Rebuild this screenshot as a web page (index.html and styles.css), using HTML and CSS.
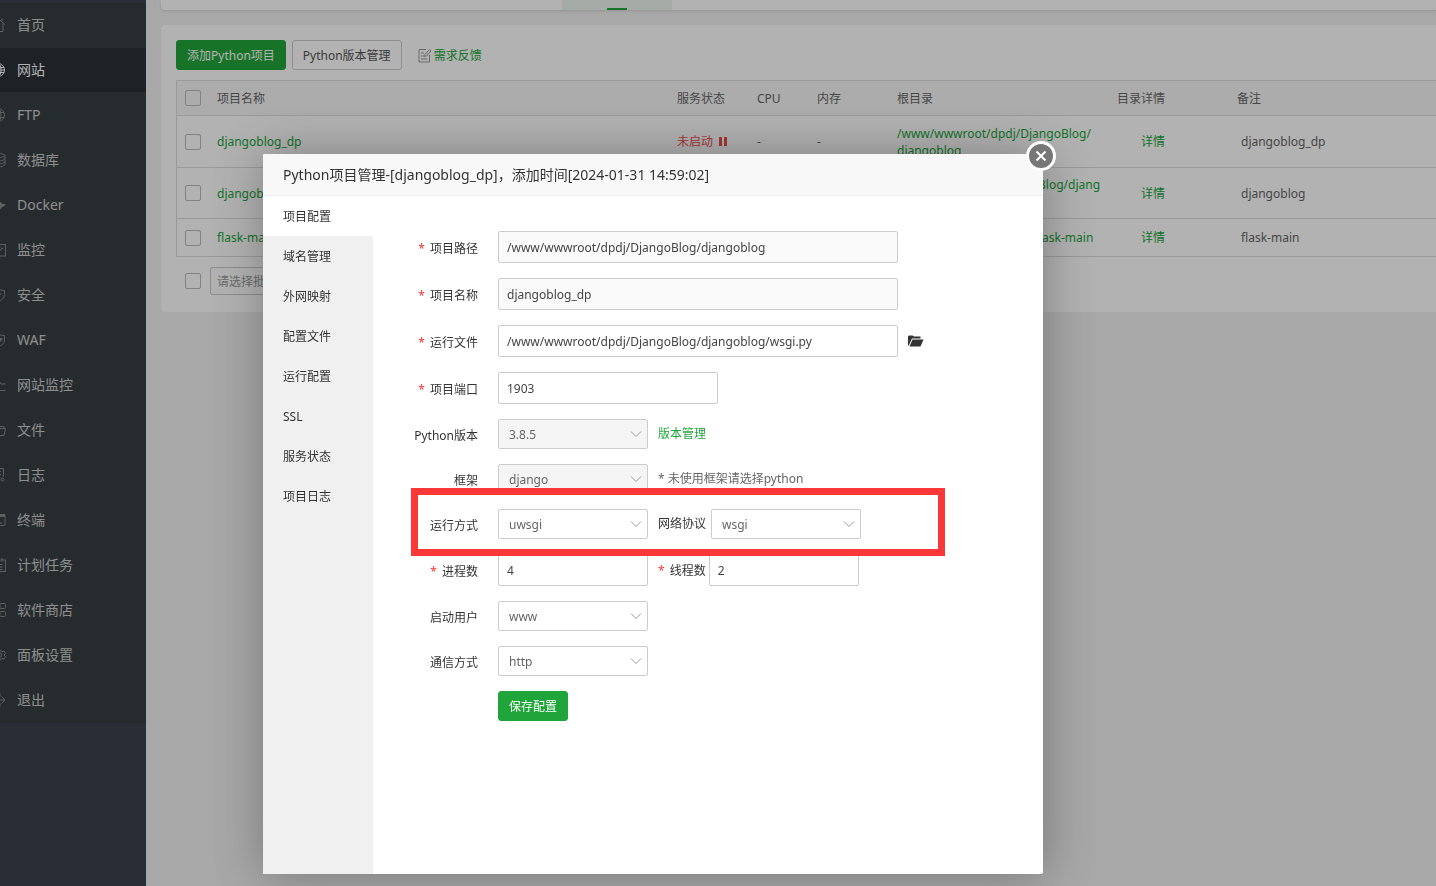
FILE: index.html
```
<!DOCTYPE html>
<html lang="zh-CN">
<head>
<meta charset="utf-8">
<title>Python项目管理</title>
<link rel="stylesheet" href="styles.css">
</head>
<body>
<div class="app">
  <nav class="sidebar">
    <ul class="menu">
      <li><a href="#"><svg viewBox="0 0 16 16"><path d="M1 7.500 8 1.500l7 6M3 6.500V14.500h3.500V10h3v4.500H13V6.500M12 1.500v3"/></svg>首页</a></li>
      <li class="active"><a href="#"><svg viewBox="0 0 16 16"><circle cx="8" cy="8" r="6.500"/><ellipse cx="8" cy="8" rx="3" ry="6.500"/><path d="M8 1.500v13M2 5.500h12M1.500 8h13M2 10.500h12"/></svg>网站</a></li>
      <li><a href="#"><svg viewBox="0 0 16 16"><circle cx="8" cy="8" r="6.500"/><ellipse cx="8" cy="8" rx="3" ry="6.500"/><path d="M8 1.500v13M2 5.500h12M2 10.500h12"/></svg>FTP</a></li>
      <li><a href="#"><svg viewBox="0 0 16 16"><ellipse cx="8" cy="3.500" rx="7" ry="2"/><path d="M1 3.500v9c0 3 14 3 14 0v-9M1 6.500c0 3 14 3 14 0M1 9.500c0 3 14 3 14 0"/></svg>数据库</a></li>
      <li><a href="#"><svg viewBox="0 0 16 16"><path class="fill" d="M0 8h9.500c.5-1 .3-2.500 0-3.500 1.500.5 2.500 1.500 2.500 2.500 1.200-.4 2.500-.2 3.500.5-.5 1.500-2 2.500-3.500 2.500C10.500 13 8 14.500 5 14.500 2 14.500 0 12 0 8Z"/></svg>Docker</a></li>
      <li><a href="#"><svg viewBox="0 0 16 16"><rect x="1" y="2.500" width="14.500" height="11.500"/><path d="m3 10 3-3 3 3 3-4 1.500 1M9.500 5.500h1"/></svg>监控</a></li>
      <li><a href="#"><svg viewBox="0 0 16 16"><path d="M8 1.500c2 1.500 4 2 6.500 2v4c0 3.500-3 6-6.500 7-3.500-1-6.500-3.500-6.500-7v-4c2.500 0 4.500-.5 6.500-2ZM5 8l2.500 2.500L11.500 6"/></svg>安全</a></li>
      <li><a href="#"><svg viewBox="0 0 16 16"><path d="M8 2c2 1 4 1.500 6.500 1.500V8c0 3.500-3 5.500-6.500 6.500C4.500 13.500 1.500 11.500 1.500 8V3.500C4 3.500 6 3 8 2Z"/><path class="fill" d="M5 6h8l-2.500 4H7Z"/></svg>WAF</a></li>
      <li><a href="#"><svg viewBox="0 0 16 16"><path d="M1 7h4l3-5 3 5h4.500M1 13.500h14.500"/></svg>网站监控</a></li>
      <li><a href="#"><svg viewBox="0 0 16 16"><path d="M1.500 13.500V2.500h5l1.500 2h6v2M1.500 6.500h14L14 13.500H1.500Z"/></svg>文件</a></li>
      <li><a href="#"><svg viewBox="0 0 16 16"><path d="M9 14.500H2.500v-13h11v8M5 4.500h6M5 7.500h6M5 10.500h4"/><circle cx="12.500" cy="12.500" r="1.500"/></svg>日志</a></li>
      <li><a href="#"><svg viewBox="0 0 16 16"><rect x="1" y="2.500" width="14" height="11" rx="1"/><path class="fill" d="M1 2h14v3H1Z"/><path d="m4 7.500 2 1.500-2 1.500M9 11h3"/></svg>终端</a></li>
      <li><a href="#"><svg viewBox="0 0 16 16"><rect x="1.500" y="3" width="14" height="11.500"/><path d="M5 1v4M12 1v4M4.500 7.500h8M4.500 10h8M4.500 12.500h8"/></svg>计划任务</a></li>
      <li><a href="#"><svg viewBox="0 0 16 16"><rect x="2" y="1.500" width="5" height="5" rx="1"/><rect x="10" y="1.500" width="5.500" height="5" rx="1"/><rect x="2" y="9.500" width="5" height="5" rx="1"/><rect x="10" y="9.500" width="5.500" height="5" rx="1"/></svg>软件商店</a></li>
      <li><a href="#"><svg viewBox="0 0 16 16"><path d="M6.500 1.500h3l.5 2 2 1 2-.5 1.500 2.500L14 8l1.500 1.500L14 12l-2-.5-2 1-.5 2h-3l-.5-2-2-1-2 .5L.5 9.500 2 8 .5 6.500 2 4l2 .5 2-1Z"/><circle cx="9" cy="8" r="2.500"/></svg>面板设置</a></li>
      <li><a href="#"><svg viewBox="0 0 16 16"><path d="M10 4.500v-3H2v13h8v-3M6 8h9M11.500 4.500 15 8l-3.500 3.500"/></svg>退出</a></li>
    </ul>
  </nav>

  <main class="main">
    <div class="tabs"><div class="tab"></div></div>
    <section class="panel">
      <div class="toolbar">
        <button class="btn primary" type="button">添加Python项目</button>
        <button class="btn" type="button">Python版本管理</button>
        <a class="feedback" href="#"><svg viewBox="0 0 13 15"><path d="M8 1.500H1v12.500h10.500V7M3 5h3M3 8h3M3 11h6.500M6.500 8.500l.5-2 4.500-5 1.500 1.500-4.500 5Z"/></svg><span>需求反馈</span></a>
      </div>
      <table class="projects">
        <colgroup><col class="c-check"><col class="c-name"><col class="c-state"><col class="c-cpu"><col class="c-mem"><col class="c-root"><col class="c-detail"><col></colgroup>
        <thead>
          <tr><th class="check"><input type="checkbox" aria-label="全选"></th><th>项目名称</th><th>服务状态</th><th>CPU</th><th>内存</th><th>根目录</th><th>目录详情</th><th>备注</th></tr>
        </thead>
        <tbody>
          <tr class="tall"><td><input type="checkbox" aria-label="djangoblog_dp"></td><td><a href="#">djangoblog_dp</a></td><td><span class="stopped">未启动<i></i></span></td><td>-</td><td>-</td><td><a href="#">/www/wwwroot/dpdj/DjangoBlog/<br>djangoblog</a></td><td class="detail"><a href="#">详情</a></td><td class="note">djangoblog_dp</td></tr>
          <tr class="tall"><td><input type="checkbox" aria-label="djangoblog"></td><td><a href="#">djangoblog</a></td><td><span class="stopped">未启动<i></i></span></td><td>-</td><td>-</td><td><a href="#">/www/wwwroot2/DjangoBlog/djang<br>oblog</a></td><td class="detail"><a href="#">详情</a></td><td class="note">djangoblog</td></tr>
          <tr><td><input type="checkbox" aria-label="flask-main"></td><td><a href="#">flask-main</a></td><td><span class="stopped">未启动<i></i></span></td><td>-</td><td>-</td><td><a href="#">/www/wwwroot/flask01/flask-main</a></td><td class="detail"><a href="#">详情</a></td><td class="note">flask-main</td></tr>
        </tbody>
      </table>
      <div class="batch">
        <input type="checkbox" aria-label="选择全部项目">
        <select aria-label="批量操作"><option>请选择批量操作</option></select>
      </div>
    </section>
  </main>
</div>

<div class="mask"></div>

<div class="dialog" role="dialog" aria-labelledby="dialog-title">
  <h1 class="dialog-title" id="dialog-title">Python项目管理-[djangoblog_dp]，添加时间[2024-01-31 14:59:02]</h1>
  <div class="dialog-body">
    <ul class="side-tabs">
      <li class="on"><a href="#">项目配置</a></li>
      <li><a href="#">域名管理</a></li>
      <li><a href="#">外网映射</a></li>
      <li><a href="#">配置文件</a></li>
      <li><a href="#">运行配置</a></li>
      <li><a href="#">SSL</a></li>
      <li><a href="#">服务状态</a></li>
      <li><a href="#">项目日志</a></li>
    </ul>
    <form class="form">
      <div class="row"><label class="name" for="path"><b>*</b>项目路径</label><input class="wide" id="path" type="text" value="/www/wwwroot/dpdj/DjangoBlog/djangoblog" readonly></div>
      <div class="row"><label class="name" for="pname"><b>*</b>项目名称</label><input class="wide" id="pname" type="text" value="djangoblog_dp" readonly></div>
      <div class="row"><label class="name" for="file"><b>*</b>运行文件</label><input class="wide" id="file" type="text" value="/www/wwwroot/dpdj/DjangoBlog/djangoblog/wsgi.py">
        <button class="folder" type="button" aria-label="选择文件"><svg viewBox="0 0 16 12"><path d="M0 11V1.500L1 .5h3.500L6 1.500h6.500V3.500H4L1 10Z"/><path d="M4.500 4.500H15.500L12.500 11.500H1.500Z"/></svg></button></div>
      <div class="row"><label class="name" for="port"><b>*</b>项目端口</label><input class="mid" id="port" type="text" value="1903"></div>
      <div class="row"><label class="name" for="ver">Python版本</label><span class="pick"><select id="ver" disabled><option>3.8.5</option></select><svg viewBox="0 0 12 8"><path d="m1 1.500 5 5 5-5"/></svg></span><a href="#">版本管理</a></div>
      <div class="row"><label class="name" for="frame">框架</label><span class="pick"><select id="frame" disabled><option>django</option></select><svg viewBox="0 0 12 8"><path d="m1 1.500 5 5 5-5"/></svg></span><span class="hint">* 未使用框架请选择python</span></div>
      <div class="row"><label class="name" for="mode">运行方式</label><span class="pick"><select id="mode"><option>uwsgi</option></select><svg viewBox="0 0 12 8"><path d="m1 1.500 5 5 5-5"/></svg></span><span class="pair"><label for="proto">网络协议</label><span class="pick"><select id="proto"><option>wsgi</option></select><svg viewBox="0 0 12 8"><path d="m1 1.500 5 5 5-5"/></svg></span></span></div>
      <div class="row"><label class="name" for="proc"><b>*</b>进程数</label><input class="short" id="proc" type="text" value="4"><span class="pair tight"><label for="thread"><b>*</b>线程数</label><input class="short" id="thread" type="text" value="2"></span></div>
      <div class="row"><label class="name" for="user">启动用户</label><span class="pick"><select id="user"><option>www</option></select><svg viewBox="0 0 12 8"><path d="m1 1.500 5 5 5-5"/></svg></span></div>
      <div class="row"><label class="name" for="comm">通信方式</label><span class="pick"><select id="comm"><option>http</option></select><svg viewBox="0 0 12 8"><path d="m1 1.500 5 5 5-5"/></svg></span></div>
      <div class="row"><span class="name"></span><button class="btn primary" type="button">保存配置</button></div>
    </form>
  </div>
  <div class="highlight"></div>
  <button class="close" type="button" aria-label="关闭"><svg viewBox="0 0 12 12"><path d="m1.500 1.500 9 9M10.500 1.500l-9 9"/></svg></button>
</div>
</body>
</html>
```
FILE: styles.css
```
* { box-sizing: border-box; }

body {
  margin: 0;
  overflow: hidden;
  background: #f1f1f1;
  color: #666;
  font: 12px/18px "Noto Sans", "Noto Sans CJK SC", sans-serif;
}

ul { margin: 0; padding: 0; list-style: none; }
a { color: #20a53a; text-decoration: none; }
button, input, select { font: inherit; }
svg { fill: none; stroke: currentColor; }

.app { display: flex; min-height: 100vh; }

/* sidebar */
.sidebar { flex: 0 0 146px; padding-top: 3px; overflow: hidden; background: #3c424e; }
.menu li { height: 45px; border-bottom: 1px solid #373e42; background: #373e42; }
.menu .active { background: #2c3036; }
.menu a {
  display: flex;
  align-items: center;
  gap: 11px;
  height: 44px;
  margin-left: -10px;
  color: #ccc;
  font-size: 14px;
}
.menu svg { width: 16px; height: 16px; color: #888; }
.menu .fill { fill: currentColor; stroke: none; }
.menu .active a, .menu .active svg { color: #fff; }

/* main area */
.main { flex: 1; min-width: 0; padding-left: 15px; }
.tabs {
  display: flex;
  height: 10px;
  margin-bottom: 15px;
  padding-left: 401px;
  border-radius: 0 0 0 4px;
  background: #fff;
  box-shadow: 0 1px 3px rgba(0, 0, 0, .12);
}
.tab {
  display: flex;
  align-items: flex-end;
  justify-content: center;
  width: 110px;
  background: #edf7ef;
}
.tab::after { content: ""; width: 20px; height: 2px; background: #20a53a; }

.panel { padding: 15px 0 17px 15px; border-radius: 4px 0 0 4px; background: #fff; }
.toolbar { display: flex; align-items: center; gap: 6px; margin-bottom: 10px; }
.btn {
  height: 30px;
  padding: 2px 10px 0;
  border: 1px solid #ccc;
  border-radius: 3px;
  background: #fff;
  color: #555;
  cursor: pointer;
}
.btn.primary { border-color: #20a53a; background: #20a53a; color: #fff; }
.feedback { display: flex; align-items: center; gap: 3px; margin-left: 10px; }
.feedback svg { width: 13px; height: 15px; color: #999; }
.feedback span { padding-top: 2px; }

.projects {
  width: 100%;
  table-layout: fixed;
  border-collapse: separate;
  border-spacing: 0;
  border: 1px solid #ddd;
  border-width: 1px 0 0 1px;
}
.c-check { width: 32px; }
.c-name { width: 460px; }
.c-state { width: 80px; }
.c-cpu { width: 60px; }
.c-mem { width: 80px; }
.c-root { width: 220px; }
.c-detail { width: 120px; }
.projects th, .projects td {
  height: 38px;
  padding: 0 8px;
  border-bottom: 1px solid #ddd;
  font-weight: normal;
  text-align: left;
}
.projects th { height: 35px; padding-top: 2px; background: #f6f6f6; }
.projects .check { padding-top: 0; }
.projects .tall td { height: 51px; line-height: 17px; }
.projects .tall:first-child td { height: 52px; }
.projects .detail { padding-left: 32px; }
.projects .note { padding-left: 12px; }
input[type="checkbox"] {
  display: block;
  appearance: none;
  width: 16px;
  height: 16px;
  margin: 0;
  border: 1px solid #bbb;
  border-radius: 2px;
}
.stopped { display: flex; align-items: center; gap: 6px; color: #ef4f4b; }
.stopped i { width: 8px; height: 9px; border: solid #ef4f4b; border-width: 0 3px; }
.batch { display: flex; align-items: center; gap: 9px; margin-top: 10px; padding-left: 9px; }
.batch select {
  appearance: none;
  width: 160px;
  height: 28px;
  padding: 2px 6px 0;
  border: 1px solid #ccc;
  border-radius: 2px;
  background: #fff;
  color: #999;
}

.mask { position: fixed; inset: 0; background: rgba(0, 0, 0, .3); }

/* dialog */
.dialog {
  position: absolute;
  top: 154px;
  bottom: 12px;
  left: 263px;
  display: flex;
  flex-direction: column;
  width: 780px;
  border-radius: 2px;
  background: #fff;
  box-shadow: 1px 1px 50px rgba(0, 0, 0, .3);
  color: #333;
}
.dialog-title {
  margin: 0;
  padding: 0 20px;
  border-bottom: 1px solid #eee;
  border-radius: 2px 2px 0 0;
  background: #f8f8f8;
  font-size: 14px;
  font-weight: normal;
  line-height: 41px;
}
.dialog-body { display: flex; flex: 1; }
.side-tabs { width: 110px; background: #f0f0f0; }
.side-tabs a { display: block; padding: 2px 0 0 20px; color: #333; line-height: 38px; }
.side-tabs .on { background: #fff; }

.form { display: flex; flex: 1; flex-direction: column; gap: 15px; padding-top: 35px; }
.row { display: flex; align-items: center; gap: 10px; }
.name { width: 105px; margin-right: 10px; padding-top: 3px; text-align: right; }
.row b { margin-right: 5px; color: #f33; font-weight: normal; }
.form input {
  height: 32px;
  padding: 0 8px;
  border: 1px solid #ccc;
  border-radius: 2px;
  background: #fff;
  color: #444;
}
.form input:read-only { background: #fafafa; }
.form .wide { width: 400px; }
.form .mid { width: 220px; }
.form .short { width: 150px; }
.pick { position: relative; display: flex; width: 150px; }
.pick select {
  appearance: none;
  width: 100%;
  height: 30px;
  padding: 2px 10px 0;
  border: 1px solid #ccc;
  border-radius: 2px;
  background: #fff;
  color: #666;
  opacity: 1;
}
.pick select:disabled { background: #f5f5f5; }
.pick svg {
  position: absolute;
  top: 11px;
  right: 6px;
  width: 12px;
  height: 8px;
  color: #999;
  pointer-events: none;
}
.pair { display: flex; align-items: center; gap: 5px; }
.pair.tight { gap: 3px; }
.pair.tight label { padding-top: 2px; }
.hint { color: #666; }
.folder { display: flex; padding: 0; border: 0; background: none; color: #333; }
.folder svg { width: 16px; height: 12px; fill: currentColor; stroke: none; }

.highlight {
  position: absolute;
  top: 334px;
  left: 148px;
  width: 534px;
  height: 68px;
  border: 7px solid #fb3737;
  pointer-events: none;
}
.close {
  position: absolute;
  top: -13px;
  right: -13px;
  display: flex;
  align-items: center;
  justify-content: center;
  width: 30px;
  height: 30px;
  padding: 0;
  border: 3px solid #fff;
  border-radius: 50%;
  background: #777;
  color: #fff;
}
.close svg { width: 12px; height: 12px; stroke-width: 2; }
```
